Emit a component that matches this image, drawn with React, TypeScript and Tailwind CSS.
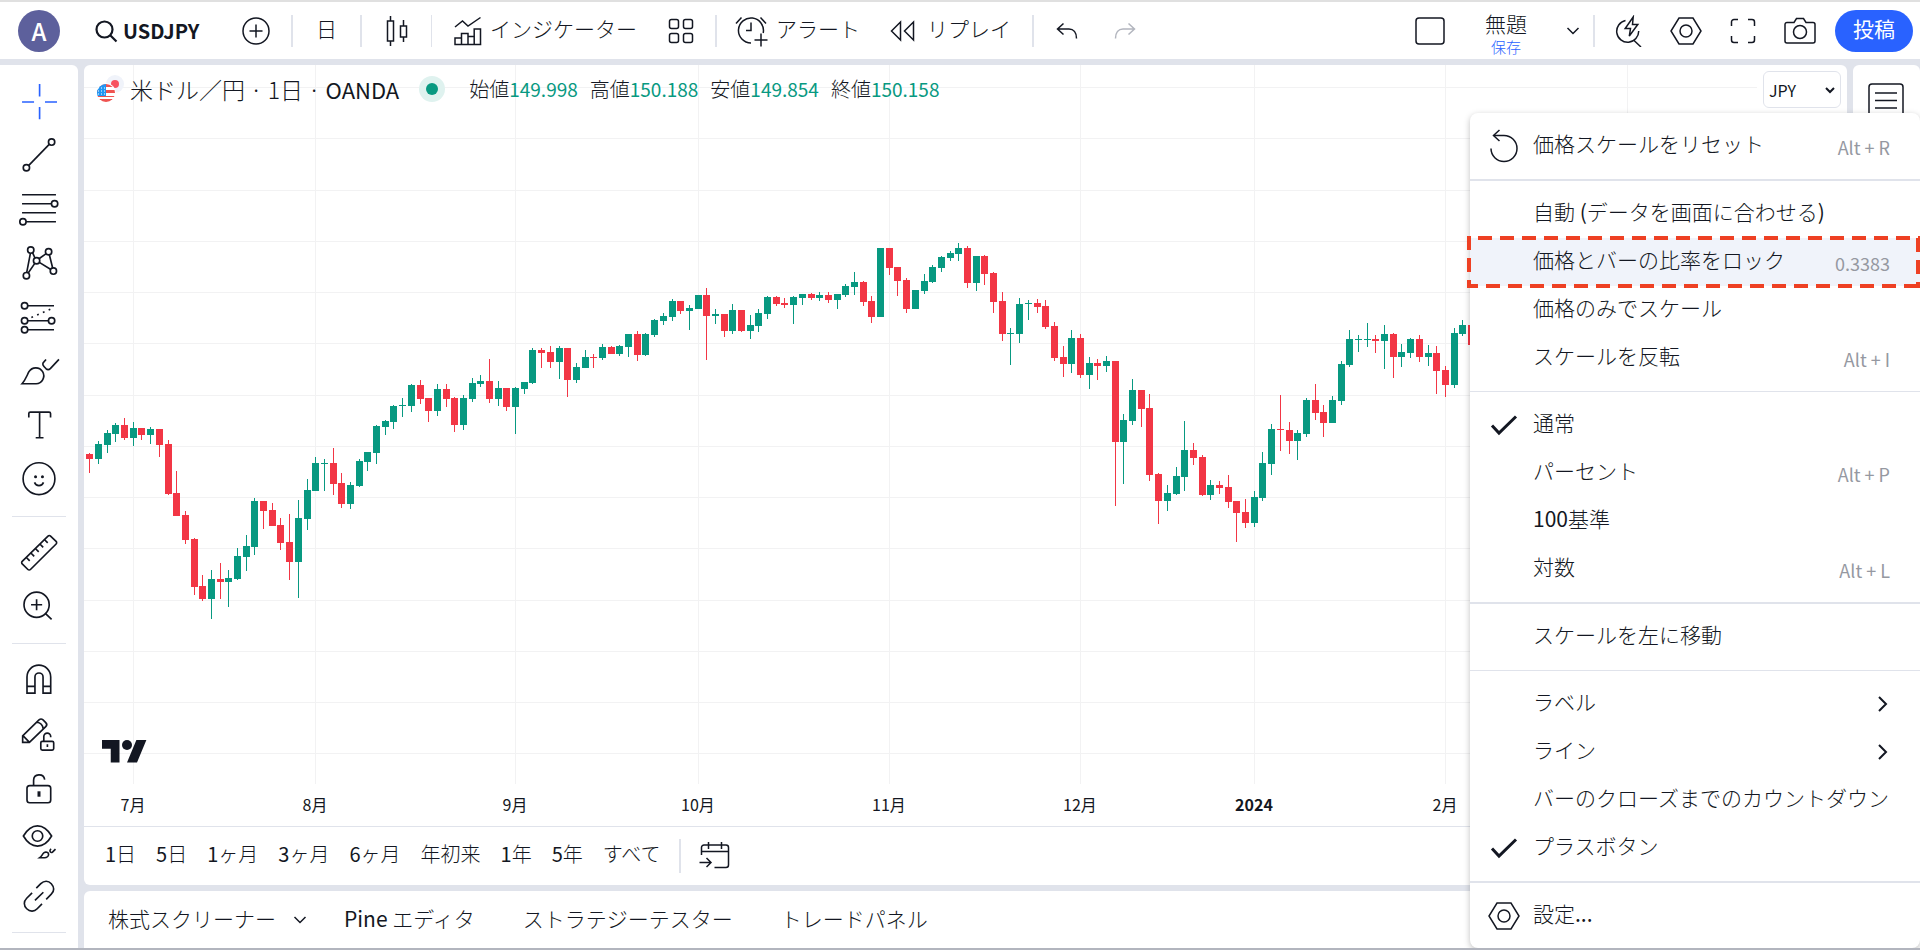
import { Fragment, type ReactNode } from 'react';

type IconProps = { w?: number; h?: number; box?: string; className?: string; stroke?: number; children: ReactNode };

function Icon({ w = 42, h = 42, box, className = '', stroke = 1.5, children }: IconProps) {
  return (
    <svg
      width={w}
      height={h}
      viewBox={box ?? `0 0 ${w} ${h}`}
      fill="none"
      stroke="currentColor"
      strokeWidth={stroke}
      className={`shrink-0 ${className}`}
      aria-hidden="true"
    >
      {children}
    </svg>
  );
}

// Toolbar icons share a 28 unit grid
function ToolIcon({ children, className = '' }: { children: ReactNode; className?: string }) {
  return (
    <Icon box="0 0 28 28" stroke={1.1} className={className}>
      {children}
    </Icon>
  );
}

function Chevron({ className = '' }: { className?: string }) {
  return (
    <Icon w={14} h={8} className={className}>
      <path d="M1.5 1l5.5 5.5L12.5 1" />
    </Icon>
  );
}

function HexIcon() {
  return (
    <Icon w={32} h={28}>
      <path d="M9 1h14l8 13-8 13H9L1 14z" />
      <circle cx="16" cy="14" r="6" />
    </Icon>
  );
}

// Kana and kanji are light, latin runs and digits are regular
function Mixed({ text }: { text: string }) {
  return (
    <span>
      {text.split(/([\x21-\x7e]+)/).map((part, i) =>
        i % 2 ? (
          <span key={i} className="font-normal">
            {part}
          </span>
        ) : (
          part
        ),
      )}
    </span>
  );
}

// x step is constant, each row is [high, top, bottom, low, up]
const candles: [number, number, number, number, 0 | 1][] = [
  [453, 454, 459, 473, 0], [441, 444, 459, 464, 1], [430, 433, 445, 453, 1], [423, 425, 434, 442, 1],
  [418, 425, 438, 440, 0], [422, 428, 438, 446, 1], [428, 428, 435, 440, 0], [427, 429, 435, 444, 1],
  [429, 429, 445, 457, 0], [440, 444, 494, 495, 0], [471, 493, 516, 516, 0], [511, 515, 540, 544, 0],
  [538, 539, 587, 595, 0], [575, 586, 599, 601, 0], [570, 579, 599, 619, 1], [563, 579, 582, 599, 0],
  [570, 578, 582, 607, 1], [548, 556, 579, 580, 1], [535, 546, 557, 571, 1], [498, 501, 547, 555, 1],
  [501, 501, 511, 529, 0], [503, 510, 526, 526, 0], [518, 525, 543, 550, 0], [514, 542, 562, 580, 0],
  [500, 518, 562, 598, 1], [479, 490, 519, 530, 1], [457, 463, 491, 491, 1], [459, 463, 464, 491, 1],
  [448, 463, 484, 495, 0], [473, 483, 504, 508, 0], [482, 485, 504, 509, 1], [459, 461, 486, 487, 1],
  [452, 452, 462, 471, 1], [425, 426, 453, 464, 1], [420, 421, 427, 435, 1], [405, 406, 422, 429, 1],
  [398, 405, 406, 417, 1], [384, 385, 406, 412, 1], [380, 385, 399, 404, 0], [398, 398, 411, 422, 0],
  [384, 389, 411, 416, 1], [384, 389, 399, 407, 0], [397, 398, 425, 432, 0], [395, 398, 425, 430, 1],
  [378, 383, 399, 402, 1], [375, 381, 384, 387, 1], [359, 381, 399, 403, 0], [381, 388, 399, 406, 1],
  [388, 388, 407, 411, 0], [387, 388, 407, 434, 1], [382, 382, 389, 394, 1], [348, 350, 383, 384, 1],
  [348, 350, 353, 368, 0], [346, 352, 362, 368, 0], [346, 348, 362, 379, 1], [348, 348, 380, 397, 0],
  [363, 367, 380, 383, 1], [350, 357, 368, 368, 1], [354, 357, 358, 368, 0], [344, 347, 358, 360, 1],
  [346, 347, 354, 354, 0], [345, 346, 354, 356, 1], [334, 334, 347, 357, 1], [331, 334, 355, 361, 0],
  [333, 334, 355, 356, 1], [319, 320, 335, 337, 1], [313, 316, 321, 325, 1], [299, 301, 317, 321, 1],
  [301, 301, 311, 314, 0], [305, 308, 311, 330, 1], [295, 295, 309, 309, 1], [288, 295, 316, 360, 0],
  [309, 314, 316, 324, 1], [314, 314, 331, 337, 0], [304, 310, 331, 334, 1], [310, 310, 331, 332, 0],
  [315, 325, 331, 339, 1], [309, 313, 326, 332, 1], [296, 297, 314, 319, 1], [296, 297, 304, 306, 0],
  [298, 303, 305, 308, 0], [296, 297, 305, 324, 1], [294, 294, 298, 305, 1], [293, 294, 298, 300, 0],
  [292, 295, 298, 301, 1], [292, 295, 300, 303, 0], [294, 294, 300, 309, 1], [284, 286, 295, 297, 1],
  [272, 282, 287, 295, 1], [281, 282, 302, 306, 0], [296, 301, 317, 323, 0], [248, 248, 317, 317, 1],
  [248, 248, 268, 275, 0], [267, 267, 281, 296, 0], [278, 280, 309, 313, 0], [290, 290, 309, 309, 1],
  [274, 281, 291, 294, 1], [265, 267, 282, 283, 1], [256, 257, 268, 272, 1], [251, 253, 258, 261, 1],
  [243, 248, 254, 261, 1], [246, 248, 283, 288, 0], [256, 256, 283, 291, 1], [255, 256, 274, 285, 0],
  [272, 273, 302, 313, 0], [292, 301, 334, 341, 0], [328, 333, 334, 365, 1], [298, 304, 334, 343, 1],
  [300, 303, 304, 320, 1], [299, 303, 307, 313, 0], [300, 306, 327, 329, 0], [322, 326, 358, 361, 0],
  [346, 357, 364, 377, 0], [330, 338, 364, 373, 1], [334, 338, 375, 378, 0], [357, 363, 375, 389, 1],
  [359, 363, 366, 380, 0], [356, 361, 366, 372, 1], [361, 361, 442, 506, 0], [414, 420, 442, 484, 1],
  [379, 390, 421, 425, 1], [390, 390, 409, 427, 0], [394, 408, 475, 481, 0], [473, 474, 501, 524, 0],
  [485, 493, 501, 511, 1], [467, 476, 494, 495, 1], [421, 450, 477, 491, 1], [443, 450, 458, 465, 0],
  [455, 457, 495, 496, 0], [480, 485, 495, 500, 1], [481, 485, 488, 494, 0], [475, 487, 502, 508, 0],
  [501, 501, 513, 542, 0], [499, 512, 523, 528, 0], [491, 497, 523, 527, 1], [452, 463, 498, 501, 1],
  [424, 429, 464, 475, 1], [395, 429, 430, 451, 0], [422, 430, 441, 454, 0], [430, 433, 441, 460, 1],
  [398, 400, 434, 437, 1], [384, 400, 413, 420, 0], [405, 412, 423, 437, 0], [396, 400, 423, 423, 1],
  [361, 364, 401, 405, 1], [330, 339, 365, 367, 1], [335, 339, 340, 352, 1], [323, 339, 340, 347, 1],
  [335, 339, 341, 353, 0], [325, 334, 341, 369, 1], [333, 334, 357, 378, 0], [344, 352, 357, 367, 1],
  [338, 339, 353, 358, 1], [335, 339, 357, 362, 0], [345, 353, 357, 366, 1], [346, 353, 371, 394, 0],
  [366, 370, 385, 397, 0], [328, 333, 385, 388, 1], [320, 325, 334, 336, 1], [325, 325, 345, 345, 0],
];

const months = [
  { x: 49, label: '7月' },
  { x: 231, label: '8月' },
  { x: 431, label: '9月' },
  { x: 614, label: '10月' },
  { x: 805, label: '11月' },
  { x: 996, label: '12月' },
  { x: 1170, label: '2024', strong: true },
  { x: 1361, label: '2月' },
  { x: 1543 },
];

const rows = Array.from({ length: 14 }, (_, i) => Math.round(22 + i * 51.25));

function Chart() {
  return (
    <svg className="block h-full w-full" role="img" aria-label="USDJPY">
      <g fill="#f2f2f3" shapeRendering="crispEdges">
        {months.map((m) => (
          <rect key={m.x} x={m.x} y="0" width="1" height="100%" />
        ))}
        {rows.map((y) => (
          <rect key={y} x="0" y={y} width="100%" height="1" />
        ))}
      </g>
      <g transform="translate(-84 -65)" shapeRendering="crispEdges">
        {candles.map(([high, top, bottom, low, up], i) => {
          const x = Math.round(89.3 + i * 8.69);
          return (
            <g key={i} fill={up ? '#089981' : '#f23645'}>
              <rect x={x} y={high} width="1" height={low - high} />
              <rect x={x - 3} y={top} width="7" height={bottom - top} />
            </g>
          );
        })}
      </g>
    </svg>
  );
}

const drawingTools: { name: string; icon: ReactNode; active?: boolean }[][] = [
  [
    { name: '十字', active: true, icon: <path d="M2.7 14h8M18 14h8M14.4 2v8.3M14.4 17.3v8.2" /> },
    {
      name: 'トレンドライン',
      icon: (
        <>
          <path d="M7.2 20.2L20.8 6.3" />
          <circle cx="5.6" cy="21.8" r="2.1" />
          <circle cx="22.4" cy="4.7" r="2.1" />
        </>
      ),
    },
    {
      name: 'フィボナッチ',
      icon: (
        <>
          <path d="M2.7 3.8h22.6M2.7 9.8h19.6M2.7 15.8h22.6M5.4 21.8h19.9" />
          <circle cx="24.4" cy="9.8" r="2.1" />
          <circle cx="3.3" cy="21.8" r="2.1" />
        </>
      ),
    },
    {
      name: 'パターン',
      icon: (
        <>
          <path d="M8.3 6.7L5.8 19.7M9.7 6.4l1.6 3.6M6.8 20l4.4-6.4M14 10.5l4.8-3.4M20.9 7.8l2.2 8.9M14.2 12.9l7.7 4.8" />
          <circle cx="8.5" cy="4.7" r="2.1" />
          <circle cx="5.6" cy="21.8" r="2.1" />
          <circle cx="12.4" cy="11.8" r="2.1" />
          <circle cx="20.4" cy="5.8" r="2.1" />
          <circle cx="23.6" cy="18.7" r="2.1" />
        </>
      ),
    },
    {
      name: '予測と測定',
      icon: (
        <>
          <path d="M6.5 5.8H24M6.5 15.8h13.8M6.5 21.8H24" />
          <path d="M8.9 13.7L22.8 7.6" strokeDasharray="1.2 3" />
          <circle cx="4.4" cy="5.8" r="2.1" />
          <circle cx="4.4" cy="15.8" r="2.1" />
          <circle cx="22.4" cy="15.8" r="2.1" />
          <circle cx="4.4" cy="21.8" r="2.1" />
        </>
      ),
    },
    {
      name: 'ブラシ',
      icon: (
        <>
          <path d="M2.7 21.8h9.4a5.3 5.3 0 1 0-4.8-8C6 16.2 5 19.3 2.7 21.8z" />
          <path d="M27.3 5.6l-5.6 6c-1 1-2.2 1-3.1.1l-1.3-1.4c-1-1-1-2.2 0-3.1l1.4-1.5" />
        </>
      ),
    },
    { name: 'テキスト', icon: <path d="M7.2 8.3V5.7c0-.6.4-1 1-1h12.5c.6 0 1 .4 1 1v2.6M14.4 4.7v17.1M11.8 21.8h5.2" /> },
    {
      name: 'アイコン',
      icon: (
        <>
          <circle cx="14" cy="13.1" r="10.6" />
          <path d="M11 15.6c.5 1.4 1.6 2.1 3 2.1s2.5-.7 3-2.1" />
          <circle cx="11.7" cy="11.8" r="1" fill="currentColor" stroke="none" />
          <circle cx="16.3" cy="11.8" r="1" fill="currentColor" stroke="none" />
        </>
      ),
    },
  ],
  [
    {
      name: '計測',
      icon: (
        <>
          <path d="M20 2.7a1.2 1.2 0 0 1 1.7 0l3.7 3.6a1.2 1.2 0 0 1 0 1.7L8.3 25a1.2 1.2 0 0 1-1.7 0l-3.8-3.7a1.2 1.2 0 0 1 0-1.7z" />
          <path d="M17.6 5l2.2 2.2M14.6 8l2.2 2.2M11.6 11l2.2 2.2M8.6 14l2.2 2.2M5.6 17l2.2 2.2" />
        </>
      ),
    },
    {
      name: 'ズームイン',
      icon: (
        <>
          <circle cx="12.4" cy="12.5" r="8.4" />
          <path d="M12.4 8.8v7.4M8.7 12.5h7.4M18.2 18.3l4.2 4" />
        </>
      ),
    },
  ],
  [
    {
      name: 'マグネット',
      icon: <path d="M6 22.7V12a7.9 7.9 0 0 1 15.8 0v10.7h-5.1V12a2.7 2.7 0 0 0-5.4 0v10.7zM6 18.2h5.3M16.7 18.2h5.1" />,
    },
    {
      name: '描画モードを維持',
      icon: (
        <>
          <path d="M3.1 19.6v-4.3L14 4.6c.8-.7 1.9-.7 2.7 0l1.8 1.8c.8.8.8 1.9 0 2.7L7.6 19.6zM12.5 6.2c2.6.3 4 1.8 4.3 4.4M3.3 15.1l4.2 4.3" />
          <rect x="15.2" y="18.9" width="8.6" height="5.8" rx="1" />
          <path d="M17.2 18.9V15.7a2.3 2.3 0 0 1 4.6 0v.5M19.6 20.9v1.8" />
        </>
      ),
    },
    {
      name: '描画をロック',
      icon: (
        <>
          <rect x="6" y="12.4" width="15.8" height="11.4" rx="1.8" />
          <path d="M10.4 12.4V8.9c0-4.6 6.6-5 7.4-.5" />
          <path d="M14 16.2v3.6" strokeWidth="2" />
        </>
      ),
    },
    {
      name: '描画を非表示',
      icon: (
        <>
          <path d="M3.6 10c2.6-4.5 5.8-6.8 9.4-6.8s6.8 2.3 9.4 6.8c-2.6 4.5-5.8 6.7-9.4 6.7S6.2 14.500 3.6 10z" />
          <circle cx="13" cy="10" r="3.5" />
          <path d="M14.5 24.5h3.2c1.5 0 2.7-1.1 2.7-2.4s-1.9-1.8-3-1c-1.2.9-1.6 2.5-2.9 3.4zM25 18.7l-2 2c-.5.4-1 .4-1.3 0-.7-.7-.4-1.6.4-2.1" />
        </>
      ),
    },
    {
      name: '描画を同期',
      icon: <path d="M12.2 8.8l3-3c2.2-2.2 5-2.2 7 0s2.2 5 0 7l-3.4 3.4M9.4 11.9l-3.6 3.6c-2.1 2.1-2.1 5 0 7s5 2.1 7 0l3.2-3.2M11.3 16.9l5.6-5.4" />,
    },
  ],
];

type MenuItem = {
  label: string;
  hint?: string;
  checked?: boolean;
  sub?: boolean;
  marked?: boolean;
  icon?: ReactNode;
};

const menuGroups: MenuItem[][] = [
  [
    {
      label: '価格スケールをリセット',
      hint: 'Alt + R',
      icon: (
        <Icon w={30} h={34}>
          <path d="M2 19.5a13 13 0 1 0 13-13H5" />
          <path d="M10.5 1L4.5 6.5l6 5.5" />
        </Icon>
      ),
    },
  ],
  [
    { label: '自動 (データを画面に合わせる)' },
    { label: '価格とバーの比率をロック', hint: '0.3383', marked: true },
    { label: '価格のみでスケール' },
    { label: 'スケールを反転', hint: 'Alt + I' },
  ],
  [
    { label: '通常', checked: true },
    { label: 'パーセント', hint: 'Alt + P' },
    { label: '100基準' },
    { label: '対数', hint: 'Alt + L' },
  ],
  [{ label: 'スケールを左に移動' }],
  [
    { label: 'ラベル', sub: true },
    { label: 'ライン', sub: true },
    { label: 'バーのクローズまでのカウントダウン' },
    { label: 'プラスボタン', checked: true },
  ],
  [{ label: '設定...', icon: <HexIcon /> }],
];

function DashedFrame() {
  return (
    <svg
      className="pointer-events-none absolute -top-[2px] -left-[3px] h-[52px] w-[calc(100%+3px)]"
      stroke="#ee4023"
      strokeWidth="8"
      strokeDasharray="14 8"
      aria-hidden="true"
    >
      <line x1="0" y1="0" x2="100%" y2="0" strokeDashoffset="11" />
      <line x1="0" y1="100%" x2="100%" y2="100%" strokeDashoffset="3" />
      <line x1="0" y1="0" x2="0" y2="100%" />
      <line x1="100%" y1="0" x2="100%" y2="100%" strokeDashoffset="-2" />
    </svg>
  );
}

function ScaleMenu() {
  return (
    <div
      role="menu"
      className="absolute top-[111px] right-0 z-10 w-[450px] rounded-lg bg-white pt-[9px] pb-2 shadow-[0_2px_6px_rgba(0,0,0,0.25)]"
    >
      {menuGroups.map((group, g) => (
        <Fragment key={g}>
          {g > 0 && <div className={`my-[9px] bg-[#e0e3eb] ${g % 2 ? 'h-[2px]' : 'h-px'}`} />}
          {group.map((item) => (
            <button
              key={item.label}
              role="menuitem"
              className={`relative flex h-12 w-full items-center pr-[30px] text-left ${item.marked ? 'bg-[#f0f3fa]' : ''}`}
            >
              <span className="flex w-[63px] shrink-0 justify-center pl-1">
                {item.icon}
                {item.checked && (
                  <Icon w={28} h={22} stroke={3}>
                    <path d="M2 11.5l7 7.5L26 2.5" />
                  </Icon>
                )}
              </span>
              <span className="grow pb-[6px] text-[21px] leading-7 whitespace-nowrap">
                <Mixed text={item.label} />
              </span>
              {item.hint && <span className="pt-[2px] text-[18px] leading-6 font-normal text-[#9598a1]">{item.hint}</span>}
              {item.sub && (
                <Icon w={14} h={16} stroke={2}>
                  <path d="M3 1l7 7-7 7" />
                </Icon>
              )}
              {item.marked && <DashedFrame />}
            </button>
          ))}
        </Fragment>
      ))}
    </div>
  );
}

function Divider({ thin = false }: { thin?: boolean }) {
  return <div className={`h-8 shrink-0 bg-[#e0e3eb] ${thin ? 'w-px' : 'w-[2px]'}`} />;
}

function Header() {
  const cell = 'flex h-full shrink-0 items-center justify-center';
  const wide = 'flex h-full shrink-0 items-center whitespace-nowrap text-[21px]';
  return (
    <header className="flex h-[57px] items-center bg-white">
      <button className="ml-[18px] size-[42px] shrink-0 rounded-full bg-[#5d609c] text-2xl font-medium text-white">A</button>
      <button className="ml-[34px] flex h-full w-[148px] shrink-0 items-center gap-[5px] text-[20px] font-bold">
        <Icon w={24} h={24} stroke={2.2}>
          <circle cx="10.5" cy="10.5" r="8" />
          <path d="M16.5 16.5l6 6" />
        </Icon>
        USDJPY
      </button>
      <button className="mr-[21px] shrink-0" aria-label="比較">
        <Icon w={28} h={28}>
          <circle cx="14" cy="14" r="13" />
          <path d="M14 7.5v13M7.5 14h13" />
        </Icon>
      </button>
      <Divider />
      <button className={`${cell} w-[67px] pb-1 text-[21px]`}>日</button>
      <Divider />
      <button className={`${cell} w-[69px]`} aria-label="ローソク足">
        <Icon w={24} h={32}>
          <rect x="2.5" y="6" width="6" height="20" />
          <path d="M5.5 1v5M5.5 26v5M18.5 5v6M18.5 22v5" />
          <rect x="15.5" y="11" width="6" height="11" />
        </Icon>
      </button>
      <Divider thin />
      <button className={`${wide} w-[215px] gap-2 pl-[22px]`}>
        <Icon w={28} h={30}>
          <path d="M1 11l7.5-6 5.5 5L26.5 1.500M1 28.500V22h6.5v6.500M7.5 22v-4.500H14v11M14 20.500h6.2M20.2 28.500V13h6.300v15.500M.3 28.500h27" />
        </Icon>
        <span className="pb-1">インジケーター</span>
      </button>
      <button className={`${cell} w-[68px]`} aria-label="テンプレート">
        <Icon w={26} h={26}>
          <rect x="1.5" y="1.5" width="9" height="9" rx="2" />
          <rect x="15.5" y="1.5" width="9" height="9" rx="2" />
          <rect x="1.5" y="15.5" width="9" height="9" rx="2" />
          <rect x="15.5" y="15.5" width="9" height="9" rx="2" />
        </Icon>
      </button>
      <Divider />
      <button className={`${wide} w-[159px] gap-2 pl-[18px]`}>
        <Icon w={33} h={32}>
          <path d="M16 28A12.5 12.5 0 1 1 28.2 18M16 7.5v8h-5M1 8.5l5.5-6M25.5 2.5l5.5 6M26 18.5v13M19.5 25h13" />
        </Icon>
        <span className="pb-1">アラート</span>
      </button>
      <button className={`${wide} w-[156px] gap-3 pl-[14px]`}>
        <Icon w={25} h={22}>
          <path d="M10.5 2v18L1.5 11zM23.5 2v18l-9-9z" />
        </Icon>
        <span className="pb-1">リプレイ</span>
      </button>
      <Divider />
      <button className={`${cell} w-[66px]`} aria-label="元に戻す">
        <Icon w={22} h={18}>
          <path d="M7.5 1.5L1.5 7l6 5.5M1.5 7H13c4.5 0 7.5 3.5 7.5 9.5" />
        </Icon>
      </button>
      <button className={`${cell} w-[50px] text-[#b2b5be]`} aria-label="やり直す">
        <Icon w={22} h={18}>
          <path d="M14.5 1.5l6 5.5-6 5.5M20.5 7H9C4.5 7 1.5 10.5 1.5 16.5" />
        </Icon>
      </button>

      <button className={`${cell} ml-auto w-[58px]`} aria-label="レイアウト">
        <Icon w={30} h={28}>
          <rect x="1" y="1" width="28" height="26" rx="3" />
        </Icon>
      </button>
      <button className={`${cell} w-[94px] flex-col pt-1`}>
        <span className="text-[21px] leading-7">無題</span>
        <span className="text-[15px] leading-5 text-[#2962ff]">保存</span>
      </button>
      <button className={`${cell} w-10`} aria-label="レイアウトの管理">
        <Chevron />
      </button>
      <Divider />
      <button className={`${cell} ml-[5px] w-[57px]`} aria-label="クイック検索">
        <Icon w={28} h={32}>
          <path d="M10.5 5.5a11 11 0 1 0 13.2 10.5M18.5 25l7.5 7M18.2 2l-8 11.5h5.3L14.3 21l8.5-11.5h-5.3z" />
        </Icon>
      </button>
      <button className={`${cell} w-[57px]`} aria-label="設定">
        <HexIcon />
      </button>
      <button className={`${cell} w-[57px]`} aria-label="全画面">
        <Icon w={26} h={26}>
          <path d="M1.5 8V4a2.500 2.500 0 0 1 2.500-2.500h4M18 1.500h4A2.500 2.500 0 0 1 24.500 4v4M24.500 18v4a2.500 2.500 0 0 1-2.500 2.500h-4M8 24.500H4A2.500 2.500 0 0 1 1.500 22v-4" />
        </Icon>
      </button>
      <button className={`${cell} w-[57px]`} aria-label="スナップショット">
        <Icon w={32} h={28}>
          <path d="M3 5.5h7l2.5-4h7l2.5 4h7a2 2 0 0 1 2 2V24a2 2 0 0 1-2 2H3a2 2 0 0 1-2-2V7.5a2 2 0 0 1 2-2z" />
          <circle cx="16" cy="15" r="6.5" />
        </Icon>
      </button>
      <button className="mr-[7px] ml-[7px] h-[42px] w-[78px] shrink-0 rounded-full bg-[#2962ff] pb-1 text-[21px] font-normal text-white">
        投稿
      </button>
    </header>
  );
}

const quotes = [
  ['始値', '149.998'],
  ['高値', '150.188'],
  ['安値', '149.854'],
  ['終値', '150.158'],
];

function Legend() {
  return (
    <div className="absolute top-2 left-3 flex h-8 items-center whitespace-nowrap">
      <svg width="29" height="28" viewBox="0 0 29 28" aria-hidden="true">
        <circle cx="19" cy="9" r="9" fill="#f0f3fa" />
        <circle cx="19" cy="9" r="4" fill="#f7525f" />
        <circle cx="10" cy="18" r="10" fill="#fff" />
        <clipPath id="us">
          <circle cx="10" cy="18" r="9" />
        </clipPath>
        <g clipPath="url(#us)">
          <path d="M0 9h20v3H0zM0 15h20v3H0zM0 21h20v1H0zM0 24h20v4H0z" fill="#ef5350" />
          <path d="M0 9h10v12H0z" fill="#2196f3" />
          <path d="M2 13h8M2 16h8M2 19h8" stroke="#fff" strokeDasharray="1 2" />
        </g>
      </svg>
      <h1 className="ml-[5px] text-[23px] leading-8">
        米ドル／円 · 1日 · <span className="text-[22px] font-normal">OANDA</span>
      </h1>
      <span className="ml-5 flex size-[26px] items-center justify-center rounded-full bg-[#dff2ef]">
        <span className="size-3 rounded-full bg-[#089981]" />
      </span>
      <div className="ml-6 flex gap-3 text-[20px] leading-8">
        {quotes.map(([name, value]) => (
          <span key={name}>
            {name}
            <span className="text-[19px] font-normal text-[#089981]">{value}</span>
          </span>
        ))}
      </div>
    </div>
  );
}

const ranges = ['1日', '5日', '1ヶ月', '3ヶ月', '6ヶ月', '年初来', '1年', '5年', 'すべて'];

export default function App() {
  return (
    <div className="relative flex min-h-screen flex-col overflow-hidden border-t-2 border-b-2 border-t-[#e0e0e0] border-b-[#b2b5be] bg-[#e0e3eb] font-['Noto_Sans_CJK_JP',sans-serif] font-light text-[#131722]">
      <Header />
      <div className="mt-[6px] flex grow gap-[6px]">
        <nav className="w-[78px] shrink-0 rounded-tr-md bg-white pt-[10px]">
          {drawingTools.map((group, g) => (
            <div key={g}>
              {group.map((tool) => (
                <button
                  key={tool.name}
                  aria-label={tool.name}
                  className={`flex h-[54px] w-full items-center justify-center ${tool.active ? 'text-[#2962ff]' : ''}`}
                >
                  <ToolIcon>{tool.icon}</ToolIcon>
                </button>
              ))}
              <div className="mx-3 my-[9px] h-px bg-[#e0e3eb]" />
            </div>
          ))}
        </nav>

        <div className="flex min-w-0 grow flex-col gap-[6px]">
          <div className="flex grow gap-[6px]">
            <main className="flex min-w-0 grow flex-col overflow-hidden rounded-md bg-white">
              <div className="relative flex min-h-[400px] grow">
                <div className="relative min-w-0 grow">
                  <div className="absolute inset-0">
                    <Chart />
                  </div>
                  <Legend />
                  <svg className="absolute bottom-[14px] left-[18px]" width="45" height="35" viewBox="0 0 36 28" fill="#131722" aria-hidden="true">
                    <path d="M14 22H7V11H0V4h14v18zM28 22h-8l7.5-18h8L28 22z" />
                    <circle cx="20" cy="8" r="4" />
                  </svg>
                </div>
                <div className="w-[90px] shrink-0 px-[6px] pt-[6px]">
                  <label className="relative block">
                    <select
                      aria-label="通貨"
                      className="h-[37px] w-full appearance-none rounded-md border border-[#e0e3eb] bg-white pl-[5px] text-base font-normal"
                    >
                      <option>JPY</option>
                    </select>
                    <Icon w={10} h={7} stroke={2} className="pointer-events-none absolute top-4 right-[6px]">
                      <path d="M1 1l4 4 4-4" />
                    </Icon>
                  </label>
                </div>
              </div>
              <svg className="block h-[42px] w-full shrink-0 text-base" fill="currentColor" textAnchor="middle">
                {months.map(
                  (m) =>
                    m.label && (
                      <text key={m.x} x={m.x} y="27" fontWeight={m.strong ? 700 : 400}>
                        {m.label}
                      </text>
                    ),
                )}
              </svg>
              <div className="flex h-[59px] shrink-0 items-center border-t border-[#e0e3eb] pl-[21px] text-[20px]">
                <div className="flex gap-5 pb-1">
                  {ranges.map((r) => (
                    <button key={r}>
                      <Mixed text={r} />
                    </button>
                  ))}
                </div>
                <div className="mr-[18px] ml-[18px] h-[34px] w-[2px] bg-[#e0e3eb]" />
                <button aria-label="日付へ移動">
                  <Icon w={32} h={30}>
                    <path d="M2.5 14V6.5A2.5 2.5 0 0 1 5 4h22a2.5 2.5 0 0 1 2.5 2.5V24a2.5 2.5 0 0 1-2.5 2.5H15.5M2.5 10.5h27M9.5 1v7M22.5 1v7M.5 21.5h11M7.5 17l4.5 4.5L7.5 26" />
                  </Icon>
                </button>
              </div>
            </main>
            <aside className="w-[67px] shrink-0 rounded-md bg-white pt-[18px] pl-[15px]">
              <button aria-label="ウォッチリスト">
                <Icon w={36} h={36}>
                  <rect x="1" y="1" width="34" height="34" rx="3" />
                  <path d="M7 10h22M7 17.5h22M7 25h22" />
                </Icon>
              </button>
            </aside>
          </div>

          <footer className="flex h-[57px] shrink-0 items-center rounded-tl-md bg-white pl-6 text-[21px] whitespace-nowrap">
            <button className="flex items-center">
              <span className="pb-[2px]">株式スクリーナー</span>
              <Chevron className="ml-[17px]" />
            </button>
            <button className="ml-[37px] pb-[2px]">
              <Mixed text="Pine エディタ" />
            </button>
            <button className="ml-12 pb-[2px]">ストラテジーテスター</button>
            <button className="ml-12 pb-[2px]">トレードパネル</button>
          </footer>
        </div>
      </div>
      <ScaleMenu />
    </div>
  );
}
